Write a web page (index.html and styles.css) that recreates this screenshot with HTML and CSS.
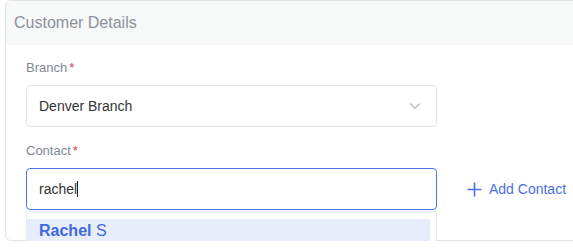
FILE: index.html
```html
<!DOCTYPE html>
<html lang="en">
<head>
  <meta charset="UTF-8">
  <title>Customer Details</title>
  <link rel="stylesheet" href="styles.css">
</head>
<body>
  <div class="card">
    <div class="card-header">Customer Details</div>
    <div class="card-body">
      <div class="field">
        <label class="field-label">Branch<span class="req">*</span></label>
        <div class="select">
          <span>Denver Branch</span>
          <svg class="chevron" width="12" height="8" viewBox="0 0 12 8"><path d="M1 1.5 6 6.2 11 1.5" fill="none" stroke="#b3b6bb" stroke-width="1.2"/></svg>
        </div>
      </div>

      <div class="field">
        <label class="field-label">Contact<span class="req">*</span></label>
        <div class="contact-row">
          <div class="combo">
            <div class="input focused">rachel<span class="caret"></span></div>
            <div class="dropdown">
              <div class="option active"><b>Rachel</b> S</div>
            </div>
          </div>
          <a class="add-link" href="#">
            <svg width="15" height="15" viewBox="0 0 15 15"><path d="M7.5 0.5v14M0.5 7.5h14" stroke="#4a6fe3" stroke-width="1.6"/></svg>
            Add Contact
          </a>
        </div>
      </div>
    </div>
  </div>
</body>
</html>
```

FILE: styles.css
```css
body {
  margin: 0;
  font-family: "Liberation Sans", Arial, sans-serif;
  background-color: #fff;
  overflow: hidden;
}

.card {
  margin-left: 5px;
  width: 640px;
  height: 241px;
  border: 1px solid #e2e3e5;
  border-radius: 6px;
  background-color: #fff;
  box-sizing: border-box;
}

.card-header {
  height: 44px;
  padding-left: 8px;
  line-height: 44px;
  font-size: 16px;
  color: #8d929a;
  background-color: #f7f8f8;
  border-radius: 6px 6px 0 0;
}

.card-body {
  padding: 13px 20px 0;
}

.field {
  margin-bottom: 14px;
}

.field-label {
  display: block;
  font-size: 13px;
  line-height: 20px;
  color: #7f8696;
  margin-bottom: 7px;
}

.req {
  color: #d2405e;
  margin-left: 2px;
}

.select,
.input {
  width: 411px;
  height: 42px;
  box-sizing: border-box;
  border: 1px solid #e4e5e7;
  border-radius: 4px;
  padding: 0 12px;
  display: flex;
  align-items: center;
  font-size: 14px;
  color: #333;
}

.select {
  justify-content: space-between;
  padding-right: 15px;
}

.contact-row {
  display: flex;
  align-items: center;
  gap: 30px;
}

.combo {
  position: relative;
}

.input.focused {
  border-color: #4a74e6;
}

.caret {
  display: inline-block;
  width: 1px;
  height: 16px;
  background-color: #222;
}

.dropdown {
  position: absolute;
  top: 43px;
  left: 0;
  width: 411px;
  box-sizing: border-box;
  border: 1px solid #ececee;
  border-bottom: none;
  background-color: #fff;
  padding: 7px 6px 20px 0;
}

.option {
  height: 24px;
  line-height: 24px;
  padding-left: 12px;
  font-size: 16px;
  color: #4169de;
}

.option.active {
  background-color: #e7edfa;
}

.add-link {
  display: flex;
  align-items: center;
  gap: 7px;
  font-size: 14px;
  color: #4a6fe3;
  text-decoration: none;
}
```
